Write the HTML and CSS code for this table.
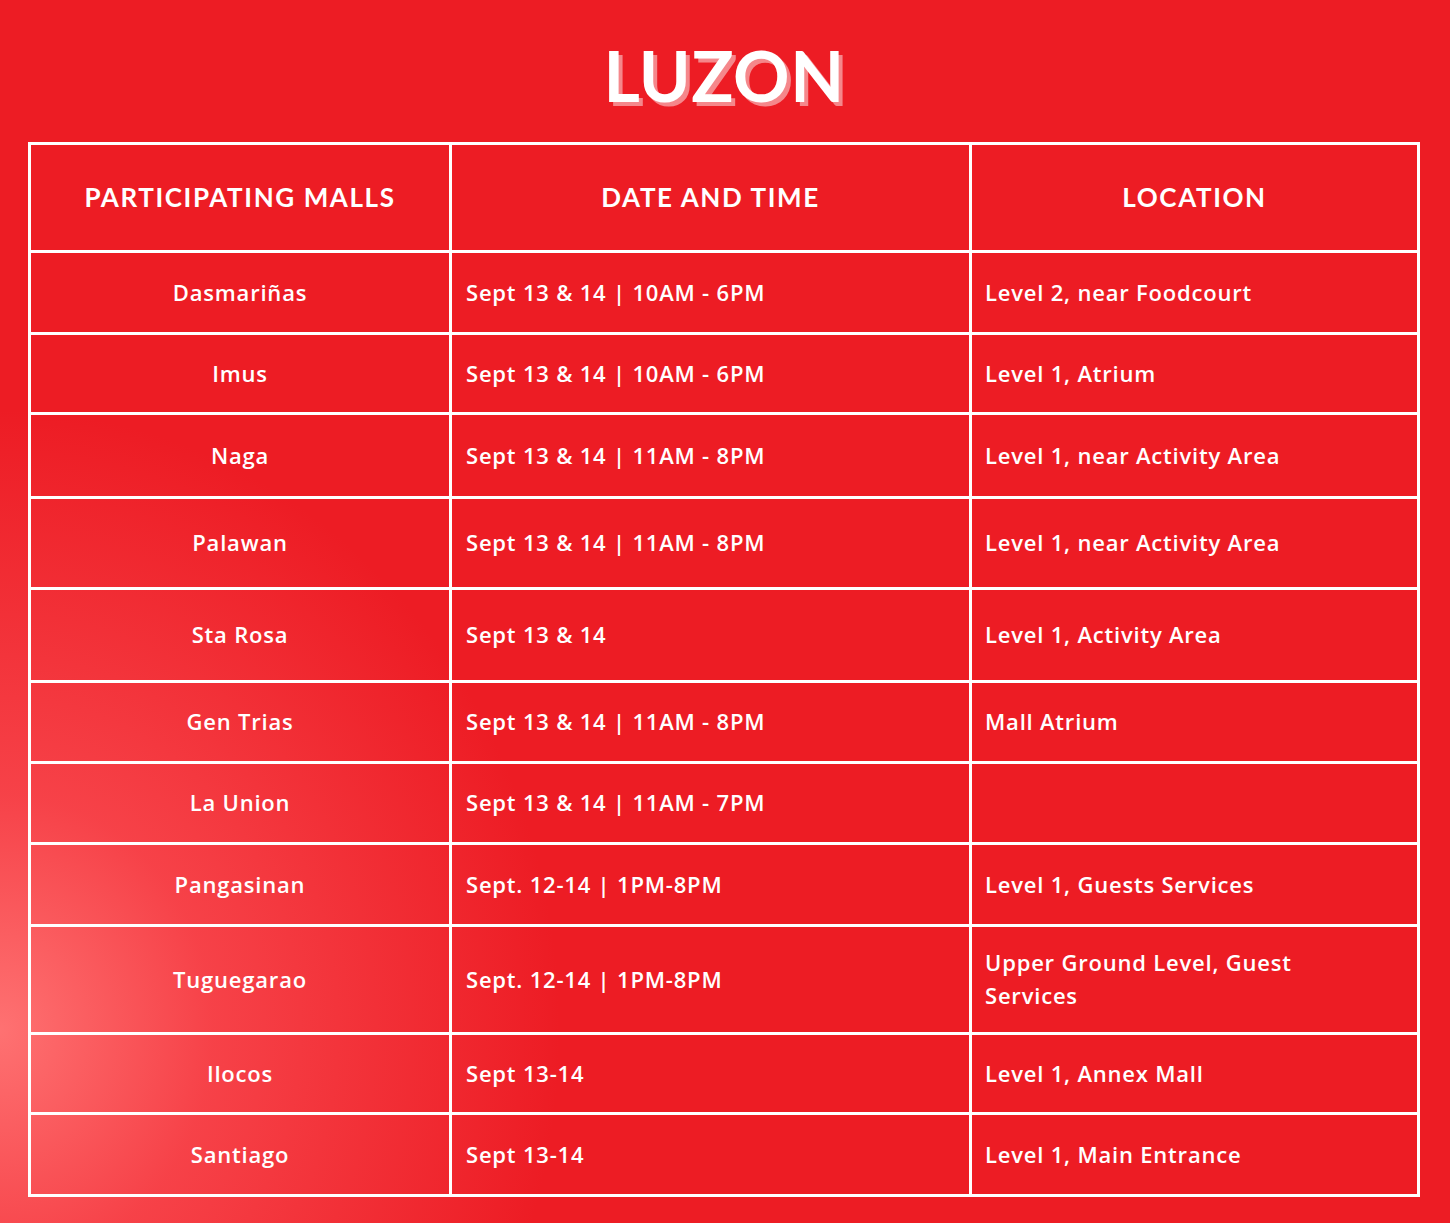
FILE: index.html
```html
<!DOCTYPE html>
<html lang="en">
<head>
<meta charset="utf-8">
<title>Luzon – Participating Malls</title>
<link rel="stylesheet" href="styles.css">
</head>
<body>
<main class="page">
  <h1 class="title">LUZON</h1>
  <div class="schedule">
    <div class="cell head">PARTICIPATING MALLS</div>
    <div class="cell head">DATE AND TIME</div>
    <div class="cell head">LOCATION</div>

    <div class="cell mall">Dasmariñas</div>
    <div class="cell">Sept 13 &amp; 14 | 10AM - 6PM</div>
    <div class="cell">Level 2, near Foodcourt</div>

    <div class="cell mall">Imus</div>
    <div class="cell">Sept 13 &amp; 14 | 10AM - 6PM</div>
    <div class="cell">Level 1, Atrium</div>

    <div class="cell mall">Naga</div>
    <div class="cell">Sept 13 &amp; 14 | 11AM - 8PM</div>
    <div class="cell">Level 1, near Activity Area</div>

    <div class="cell mall">Palawan</div>
    <div class="cell">Sept 13 &amp; 14 | 11AM - 8PM</div>
    <div class="cell">Level 1, near Activity Area</div>

    <div class="cell mall">Sta Rosa</div>
    <div class="cell">Sept 13 &amp; 14</div>
    <div class="cell">Level 1, Activity Area</div>

    <div class="cell mall">Gen Trias</div>
    <div class="cell">Sept 13 &amp; 14 | 11AM - 8PM</div>
    <div class="cell">Mall Atrium</div>

    <div class="cell mall">La Union</div>
    <div class="cell">Sept 13 &amp; 14 | 11AM - 7PM</div>
    <div class="cell"></div>

    <div class="cell mall">Pangasinan</div>
    <div class="cell">Sept. 12-14 | 1PM-8PM</div>
    <div class="cell">Level 1, Guests Services</div>

    <div class="cell mall">Tuguegarao</div>
    <div class="cell">Sept. 12-14 | 1PM-8PM</div>
    <div class="cell">Upper Ground Level, Guest<br>Services</div>

    <div class="cell mall">Ilocos</div>
    <div class="cell">Sept 13-14</div>
    <div class="cell">Level 1, Annex Mall</div>

    <div class="cell mall">Santiago</div>
    <div class="cell">Sept 13-14</div>
    <div class="cell">Level 1, Main Entrance</div>
  </div>
</main>
</body>
</html>
```

FILE: styles.css
```css
* { box-sizing: border-box; }

html, body {
  margin: 0;
  padding: 0;
}

body {
  width: 1450px;
  height: 1223px;
  overflow: hidden;
  background-color: #ed1c24;
  background-image:
    radial-gradient(ellipse 560px 620px at 0px 1030px, rgba(255,118,118,0.95) 0%, rgba(250,80,86,0.72) 38%, rgba(237,28,36,0) 100%);
  font-family: "Open Sans", "Liberation Sans", sans-serif;
  color: #fff;
}

.page {
  padding: 42px 30px 0 28px;
}

.title {
  margin: 0 0 33px 0;
  height: 67px;
  text-align: center;
  font-family: "Lato", "Liberation Sans", sans-serif;
  font-weight: 700;
  font-size: 70px;
  line-height: 67px;
  letter-spacing: 0.5px;
  color: #fff;
  text-shadow: 4px 4px 0 #f5878b;
}

.schedule {
  display: grid;
  width: 1392px;
  grid-template-columns: 421px 520px 448px;
  grid-template-rows: 108px 82px 80px 84px 91px 93px 81px 81px 82px 108px 80px 82px;
  border-top: 3px solid #fff;
  border-left: 3px solid #fff;
}

.cell {
  display: flex;
  align-items: center;
  border-right: 3px solid #fff;
  border-bottom: 3px solid #fff;
  padding: 0 20px 1px 14px;
  font-size: 22px;
  line-height: 33px;
  font-weight: 550;
  letter-spacing: 0.8px;
}

.cell:nth-child(3n) {
  padding-left: 13px;
}

.head {
  justify-content: center;
  padding: 0;
  font-family: "Lato", "Liberation Sans", sans-serif;
  font-weight: 700;
  font-size: 26px;
  letter-spacing: 1.6px;
}

.head:nth-child(3n) { padding: 0; }

.mall {
  justify-content: center;
  padding: 0 0 1px 0;
}
```
